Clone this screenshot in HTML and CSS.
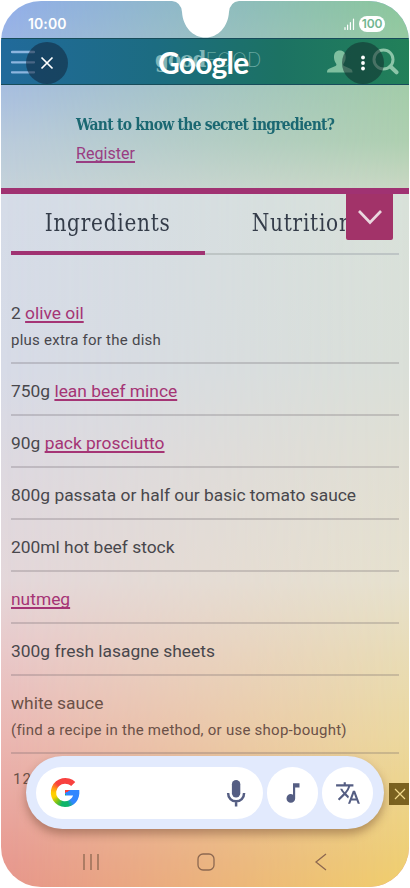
FILE: index.html
```html
<!DOCTYPE html>
<html lang="en">
<head>
<meta charset="utf-8">
<title>Good Food</title>
<link rel="stylesheet" href="styles.css">
</head>
<body>
<div class="phone">
  <div class="status">
    <span class="time">10:00</span>
    <div class="signals">
      <svg width="11" height="12" viewBox="0 0 11 12"><path d="M1 9.5v2M3.6 7v4.5M6.4 4.5v7M9.5 1v10.5" stroke="#fff" stroke-width="1.2" stroke-linecap="round"/></svg>
      <span class="battery">100</span>
    </div>
  </div>
  <header class="appbar">
    <svg class="menu" width="24" height="24" viewBox="0 0 24 24"><path d="M1 2h22M1 12.3h22M1 22.3h22" stroke="#8cb5de" stroke-width="2.3" stroke-linecap="round"/></svg>
    <div class="brand"><b>good</b><span>FOOD</span></div>
    <svg class="user" width="26" height="23" viewBox="0 0 26 23"><path d="M0 22.5c0-2.4.6-3.3 3.2-4.3l5.3-2.1c1.1-.5 1.1-1.4.7-2.3C7.800 11.800 7 9.800 7 7.200 7 2.700 9 .500 12.800.500s5.900 2.200 5.900 6.700c0 2.600-.8 4.600-2.200 6.600-.5.900-.5 1.800.7 2.300l5.100 2.100c2.600 1 3.200 1.900 3.200 4.300z" fill="#7fbf9f"/></svg>
    <svg class="search" width="27" height="27" viewBox="0 0 27 27"><circle cx="11.500" cy="11.500" r="9.500" fill="none" stroke="#8cc5a8" stroke-width="3"/><path d="M18.500 18.500l6 5.800" stroke="#8cc5a8" stroke-width="4" stroke-linecap="round"/></svg>
    <button class="disc close"><svg width="14" height="14" viewBox="0 0 14 14"><path d="M1.500 1.500l11 11M12.500 1.500l-11 11" stroke="#fff" stroke-width="1.700"/></svg></button>
    <button class="disc more"><svg width="4" height="16" viewBox="0 0 4 16" fill="#fff"><circle cx="2" cy="2.500" r="1.900"/><circle cx="2" cy="8" r="1.900"/><circle cx="2" cy="13.500" r="1.900"/></svg></button>
    <div class="google">Google</div>
  </header>
  <section class="promo">
    <h2><span class="promo-title">Want to know the secret ingredient?</span></h2>
    <a class="link">Register</a>
  </section>
  <main class="recipe">
    <nav class="tabs">
      <div class="tab active"><span>Ingredients</span></div>
      <div class="tab"><span>Nutrition</span></div>
    </nav>
    <button class="collapse"><svg width="26" height="18" viewBox="0 0 26 18"><path d="M2 3l11 11.500L24 3" fill="none" stroke="#ead7df" stroke-width="2.700"/></svg></button>
    <ul class="items">
      <li class="two"><p>2 <a class="link">olive oil</a></p><small>plus extra for the dish</small></li>
      <li><p>750g <a class="link">lean beef mince</a></p></li>
      <li><p>90g <a class="link">pack prosciutto</a></p></li>
      <li><p>800g passata or half our basic tomato sauce</p></li>
      <li><p>200ml hot beef stock</p></li>
      <li><p><a class="link">nutmeg</a></p></li>
      <li><p>300g fresh lasagne sheets</p></li>
      <li class="two"><p>white sauce</p><small>(find a recipe in the method, or use shop-bought)</small></li>
      <li class="last"><p>12</p></li>
    </ul>
  </main>
  <svg class="notch" width="68" height="38" viewBox="172 0 68 38"><path d="M172 0v1q9 1 10 11c1 15 11 25.500 23.500 25.500S228 27 229 12q1-10 10-11V0z" fill="#fff"/></svg>
  <button class="dismiss"><svg width="14" height="14" viewBox="0 0 14 14"><path d="M2 2l10 10M12 2L2 12" stroke="#f1d88b" stroke-width="1.200"/></svg></button>
  <div class="searchbar">
    <div class="field">
      <div class="g"></div>
      <svg width="24" height="28" viewBox="0 0 24 28"><rect x="6.900" y="1" width="8.400" height="17.500" rx="4.200" fill="#555e83"/><path d="M3.100 14c0 5.200 3.600 8.300 8 8.300s8-3.100 8-8.300M11.100 22v5.500" fill="none" stroke="#555e83" stroke-width="2.500"/></svg>
    </div>
    <div class="round"><svg width="26" height="26" viewBox="0 0 24 24"><path fill="#555e83" d="M12 3v10.550c-.59-.34-1.270-.55-2-.55-2.210 0-4 1.790-4 4s1.790 4 4 4 4-1.790 4-4V7h4V3h-6z"/></svg></div>
    <div class="round"><svg width="26" height="26" viewBox="0 0 24 24"><path fill="#555e83" d="M12.870 15.070l-2.540-2.510.03-.03A17.520 17.520 0 0 0 14.070 6H17V4h-7V2H8v2H1v1.990h11.170C11.500 7.920 10.440 9.750 9 11.350 8.070 10.320 7.300 9.190 6.690 8h-2c.73 1.630 1.730 3.170 2.980 4.560l-5.090 5.020L4 19l5-5 3.110 3.110.76-2.040zM18.500 10h-2L12 22h2l1.120-3h4.750L21 22h2l-4.500-12zm-2.620 7l1.620-4.330L19.120 17h-3.240z"/></svg></div>
  </div>
  <div class="navbar">
    <svg width="18" height="18" viewBox="0 0 18 18"><path d="M2 1v16M9 1v16M16 1v16"/></svg>
    <svg width="18" height="18" viewBox="0 0 18 18"><rect x="1" y="1" width="16" height="16" rx="5"/></svg>
    <svg width="18" height="18" viewBox="0 0 18 18"><path d="M14 1L4 9l10 8"/></svg>
  </div>
</div>
</body>
</html>
```
FILE: styles.css
```css
* { box-sizing: border-box; }
body { margin: 0; background: #fff; font-family: Roboto, sans-serif; }
h2, p, ul { margin: 0; padding: 0; }
button { border: 0; padding: 0; }
svg { display: block; flex: none; }
.phone {
  position: relative; width: 408px; height: 886px; margin: 1px 1px;
  border-radius: 40px; overflow: hidden; display: flex; flex-direction: column; isolation: isolate;
  background: linear-gradient(#92aeeb 0, #a7bee0 85px, #bacbdc 140px, #c5d2da 187px, #d5dce8 193px, #d7dbe7 370px, #ded9e0 470px, #e4d7da 580px, #e9c9ca 650px, #ebb7b3 735px, #e89a91 860px, #e7968c 886px);
}
.phone::before {
  content: ""; position: absolute; inset: 0; z-index: -1;
  background: linear-gradient(#8bc79a 0, #a3cca9 85px, #aecfb0 140px, #c9d8c3 187px, #d8e1d9 193px, #dadfd8 370px, #e1dfd3 470px, #e6e1ce 580px, #e8dcb7 650px, #ebd89f 735px, #eecf74 860px, #f0cf6c 886px);
  -webkit-mask-image: linear-gradient(to right, transparent, #000);
  mask-image: linear-gradient(to right, transparent, #000);
}
.status { height: 37px; flex: none; display: flex; justify-content: space-between; padding: 12px 24px 0 27px; color: #fff; }
.time { font: 600 14px/21px Inter, sans-serif; letter-spacing: .1px; }
.signals { display: flex; gap: 4px; align-items: center; height: 21px; }
.battery { width: 26px; height: 16px; border-radius: 8px; background: #fff; color: #71b690; font: 600 12px/16px Inter, sans-serif; text-align: center; letter-spacing: -.2px; }
.appbar { position: relative; height: 47px; flex: none; display: flex; align-items: center; padding: 0 10px; background: linear-gradient(90deg, #216a9b, #1c6c81 38%, #1c7263 68%, #228059); border-top: 1px solid #174c5a; border-bottom: 1px solid #174c5a; }
.brand { flex: 1; padding-left: 120px; margin-top: -2px; color: #80b6b8; white-space: nowrap; line-height: 26px; }
.brand b { font: 700 22px/26px "DejaVu Serif Condensed", "DejaVu Serif", serif; letter-spacing: -.9px; }
.brand span { font: 200 20px/26px Inter, sans-serif; letter-spacing: -.1px; color: #67a7a0; }
.user { margin-right: 19px; }
.disc { position: absolute; top: 3px; width: 42px; height: 42px; border-radius: 50%; background: rgba(16,36,58,.54); display: grid; place-items: center; }
.close { left: 25px; }
.more { left: 341px; background: rgba(16,44,44,.54); }
.google { position: absolute; left: 157px; top: 4px; font: 700 30px/38px Lato, sans-serif; color: #fff; letter-spacing: -.8px; }
.promo { height: 103px; flex: none; padding: 27px 0 0 75px; }
h2 { height: 24px; font: 700 17px/24px "DejaVu Serif Condensed", "DejaVu Serif", serif; white-space: nowrap; color: #1b6872; }
.promo-title { display: inline-block; transform-origin: 0 50%; transform: scaleX(.909); letter-spacing: -.8px; }
.link { color: #a53475; text-decoration: underline; text-decoration-thickness: 1.5px; text-underline-offset: 2px; text-decoration-skip-ink: none; }
.promo .link { display: inline-block; margin-top: 7px; font-size: 16px; line-height: 22px; letter-spacing: .05px; color: #993d82; }
.recipe { position: relative; border-top: 6px solid #a03272; flex: 1; padding: 0 10px; }
.tabs { display: flex; height: 61px; }
.tab { flex: 1; border-bottom: 2px solid #bec5c5; text-align: center; font: 24px/59px "DejaVu Serif Condensed", "DejaVu Serif", serif; color: #343c49; white-space: nowrap; }
.tab span { display: inline-block; transform: scaleX(.93); letter-spacing: .8px; }
.tab.active { border-bottom: 4px solid #a03272; }
.collapse { position: absolute; left: 345px; top: 0; width: 47px; height: 46px; background: #a23369; border-radius: 0 0 2px 2px; display: grid; place-items: center; }
.items { list-style: none; margin-top: 31px; color: #48474c; }
li { height: 52px; border-bottom: 2px solid rgba(90,80,90,.23); padding-top: 14px; }
li.two { height: 78px; }
li.last { border: 0; padding: 13px 0 0 2px; }
.items li.last p { font-size: 15px; letter-spacing: 1px; line-height: 24px; }
.items p { font-size: 17.4px; line-height: 26px; white-space: nowrap; }
.items small { display: block; margin-top: 1px; font-size: 15px; line-height: 27px; letter-spacing: .25px; white-space: nowrap; }
li:nth-child(n+8) { color: #6b5148; }
.notch { position: absolute; left: 171px; top: -1px; }
.dismiss { position: absolute; left: 388px; top: 782px; width: 21px; height: 22px; background: #7b6220; display: grid; place-items: center; }
.searchbar { position: absolute; left: 25px; top: 755px; width: 358px; height: 73px; border-radius: 37px; background: #e2eafd; display: flex; align-items: center; gap: 4px; padding: 0 10px; box-shadow: 0 5px 10px rgba(90,50,30,.4); }
.field { width: 227px; height: 52px; border-radius: 26px; background: #fff; display: flex; align-items: center; justify-content: space-between; padding: 0 14px; }
.round { width: 51px; height: 52px; border-radius: 26px; background: #fff; display: grid; place-items: center; }
.g {
  width: 30px; height: 30px;
  background: conic-gradient(from 0deg, #f8413f 0 60deg, #3086ff 62deg 140deg, #0eb469 165deg 195deg, #6fc21c 220deg, #ffd000 250deg 270deg, #ff9b12 292deg, #f8413f 320deg);
  clip-path: path("M25.300 4.500 21.200 8.600C19.400 7 17.200 6.200 15 6.200A8.800 8.800 0 1 0 23.200 18H15V12.400H29.300C30.300 22.100 24.300 29.500 15 29.500A14.500 14.500 0 1 1 25.300 4.500Z");
}
.navbar { position: absolute; left: 81px; right: 79px; top: 852px; display: flex; justify-content: space-between; }
.navbar svg { fill: none; stroke: #8d6850; stroke-width: 1.300; }
```
